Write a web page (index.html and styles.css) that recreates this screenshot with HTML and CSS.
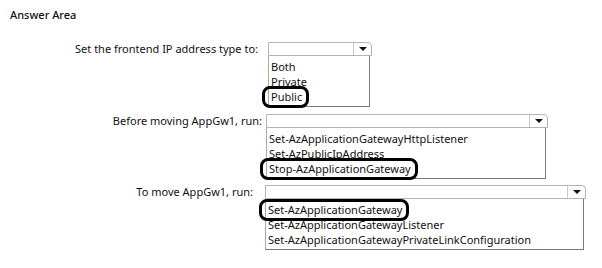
FILE: index.html
```html
<!DOCTYPE html>
<html>
<head>
<meta charset="utf-8">
<link rel="stylesheet" href="styles.css">
</head>
<body>
<div class="page">
  <div class="title">Answer Area</div>
  <div class="question q1">
    <div class="label">Set the frontend IP address type to:</div>
    <div class="dropdown">
      <div class="select"><span class="value"></span><span class="arrow"></span></div>
      <ul class="list">
        <li>Both</li>
        <li>Private</li>
        <li><span class="mark">Public</span></li>
      </ul>
    </div>
  </div>
  <div class="question q2">
    <div class="label">Before moving AppGw1, run:</div>
    <div class="dropdown">
      <div class="select"><span class="value"></span><span class="arrow"></span></div>
      <ul class="list">
        <li>Set-AzApplicationGatewayHttpListener</li>
        <li>Set-AzPublicIpAddress</li>
        <li><span class="mark">Stop-AzApplicationGateway</span></li>
      </ul>
    </div>
  </div>
  <div class="question q3">
    <div class="label">To move AppGw1, run:</div>
    <div class="dropdown">
      <div class="select"><span class="value"></span><span class="arrow"></span></div>
      <ul class="list">
        <li><span class="mark">Set-AzApplicationGateway</span></li>
        <li>Set-AzApplicationGatewayListener</li>
        <li>Set-AzApplicationGatewayPrivateLinkConfiguration</li>
      </ul>
    </div>
  </div>
</div>
</body>
</html>
```

FILE: styles.css
```css
html, body {
  margin: 0;
  padding: 0;
  background: #ffffff;
}
body {
  font-family: "Noto Sans", "Open Sans", sans-serif;
  font-size: 11px;
  color: #111;
}
.page {
  padding: 8px 0 0 10px;
}
.title {
  font-size: 11px;
  line-height: 14px;
  font-weight: 500;
  margin-bottom: 20px;
}
.question {
  display: flex;
  align-items: flex-start;
}
.q2 { margin-top: 7px; }
.q3 { margin-top: 6px; }
.label {
  text-align: right;
  line-height: 14px;
  box-sizing: border-box;
}
.q1 .label { width: 258px; padding-right: 10px; }
.q2 .label { width: 256px; padding-right: 4px; }
.q3 .label { width: 255px; padding-right: 12px; }
.dropdown {
  display: flex;
  flex-direction: column;
}
.q1 .dropdown { width: 104px; }
.q2 .dropdown { width: 282px; }
.q3 .dropdown { width: 321px; }
.select {
  display: flex;
  height: 14px;
  border: 1px solid #b4b4b4;
  border-radius: 0 4px 0 0;
  box-sizing: border-box;
  background: #fff;
}
.value { flex: 1; }
.arrow {
  width: 17px;
  border-left: 1px solid #c8c8c8;
  display: flex;
  align-items: center;
  justify-content: center;
}
.arrow::after {
  content: "";
  width: 0;
  height: 0;
  border-left: 4px solid transparent;
  border-right: 4px solid transparent;
  border-top: 4px solid #111;
}
.list {
  list-style: none;
  margin: 0 2px 0 0;
  padding: 3px 0 2px 2px;
  border: 1px solid #a8a8a8;
  border-top: none;
  border-right-color: #7a7a7a;
  border-bottom-color: #7a7a7a;
}
.list li {
  line-height: 15px;
  white-space: nowrap;
}
.mark {
  position: relative;
}
.mark::before {
  content: "";
  position: absolute;
  left: -9px;
  right: -7px;
  top: -3px;
  bottom: -4px;
  border: 3px solid #000;
  border-radius: 8px;
}
```
